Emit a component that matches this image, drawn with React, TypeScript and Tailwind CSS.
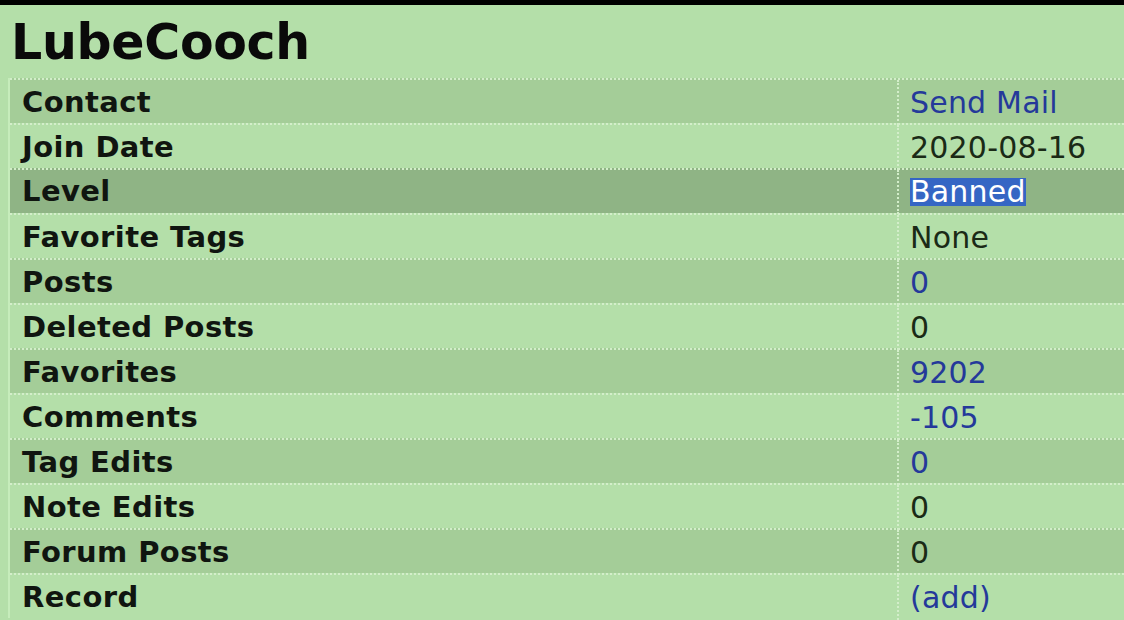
const rows: { label: string; value: string; kind: "link" | "text" | "selected" }[] = [
  { label: "Contact", value: "Send Mail", kind: "link" },
  { label: "Join Date", value: "2020-08-16", kind: "text" },
  { label: "Level", value: "Banned", kind: "selected" },
  { label: "Favorite Tags", value: "None", kind: "text" },
  { label: "Posts", value: "0", kind: "link" },
  { label: "Deleted Posts", value: "0", kind: "text" },
  { label: "Favorites", value: "9202", kind: "link" },
  { label: "Comments", value: "-105", kind: "link" },
  { label: "Tag Edits", value: "0", kind: "link" },
  { label: "Note Edits", value: "0", kind: "text" },
  { label: "Forum Posts", value: "0", kind: "text" },
  { label: "Record", value: "(add)", kind: "link" },
];

const rowBg = (i: number) => {
  if (i === 2) return "bg-[#8fb485]";
  return i % 2 === 0 ? "bg-[#a4cd98]" : "bg-[#b4dfa9]";
};

const App = () => {
  return (
    <div className="w-[1124px] h-[620px] overflow-hidden bg-[#b4dfa9] font-['DejaVu_Sans',sans-serif] text-[#111]">
      <div className="h-[5px] bg-black" />
      <h1 className="h-[73px] pl-[11px] pt-[8px] text-[49px] font-bold leading-[60px] tracking-[-0.3px] text-[#0a0a0a]">
        LubeCooch
      </h1>
      <div className="ml-[8px] border-l-2 border-[#c6ecbb]">
        {rows.map((row, i) => (
          <div
            key={row.label}
            className={`grid grid-cols-[887px_1fr] h-[45px] border-t-2 border-dotted border-[#d3eeca] ${rowBg(i)}`}
          >
            <div className="flex items-center pl-[12px] text-[29px] font-bold tracking-[0.4px] text-[#101510]">
              {row.label}
            </div>
            <div className="flex items-center border-l-2 border-dotted border-[#d3eeca] pl-[11px] text-[30px] tracking-[0.2px]">
              {row.kind === "link" && <span className="text-[#24399a]">{row.value}</span>}
              {row.kind === "text" && <span className="text-[#1a2a16]">{row.value}</span>}
              {row.kind === "selected" && (
                <span className="bg-[#3566c4] text-white leading-[28px]">{row.value}</span>
              )}
            </div>
          </div>
        ))}
      </div>
    </div>
  );
};

export default App;
